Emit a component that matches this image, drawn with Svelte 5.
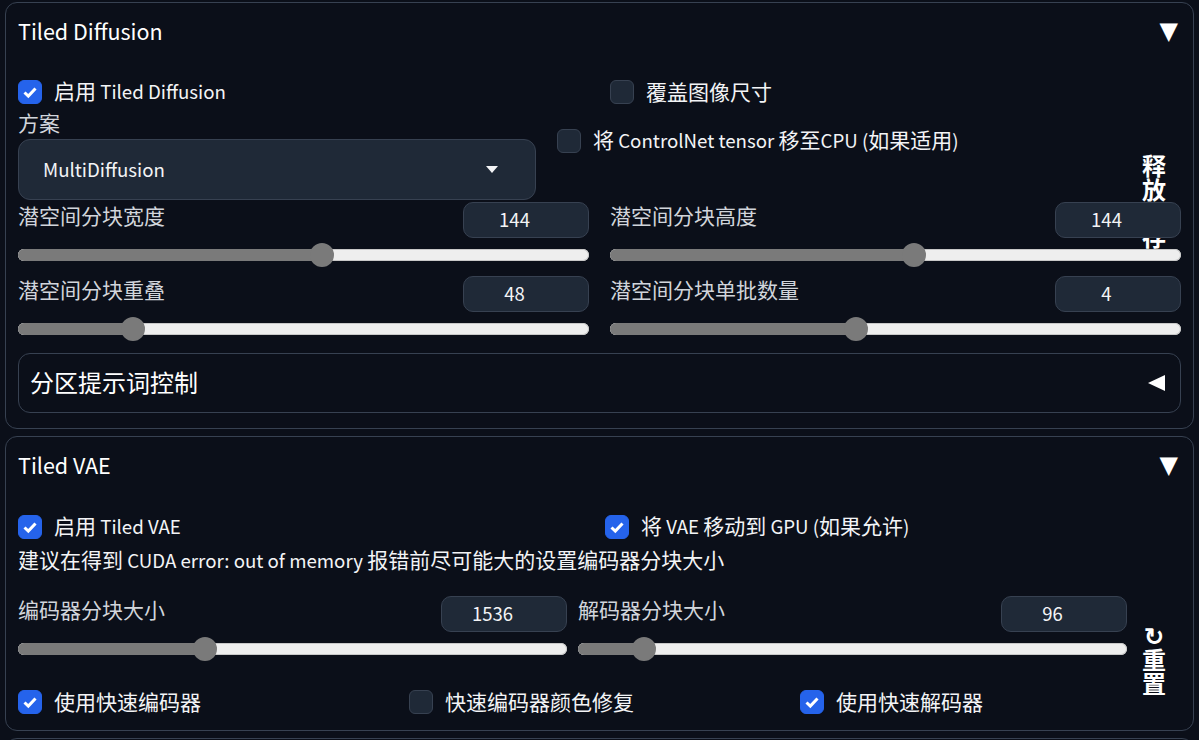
<script>
  const tile = [
    { label: '潜空间分块宽度', value: '144', pos: 53.3 },
    { label: '潜空间分块高度', value: '144', pos: 53.3 },
    { label: '潜空间分块重叠', value: '48', pos: 20.2 },
    { label: '潜空间分块单批数量', value: '4', pos: 43 }
  ];
  const vae = [
    { label: '编码器分块大小', value: '1536', pos: 34 },
    { label: '解码器分块大小', value: '96', pos: 12 }
  ];
  const parts = (s) => s.split(/([\x20-\x7e]+)/).filter(Boolean);
  const isEn = (s) => /^[\x20-\x7e]+$/.test(s);
</script>

{#snippet txt(s)}
  {#each parts(s) as p}<span class:en={isEn(p)}>{p}</span>{/each}
{/snippet}

{#snippet check(on, text)}
  <label class="check">
    <span class="box" class:on>
      {#if on}
        <svg viewBox="0 0 24 24" width="24" height="24"><path d="M6.5 12.5l3.8 3.6 7.2-7.6" fill="none" stroke="#fff" stroke-width="3" /></svg>
      {/if}
    </span>
    <span class="ctext">{@render txt(text)}</span>
  </label>
{/snippet}

{#snippet slider(s)}
  <div class="slider">
    <div class="head">
      <span class="lbl">{s.label}</span>
      <input class="num" readonly value={s.value} />
    </div>
    <div class="track">
      <div class="fill" style="width:{s.pos}%"><span class="thumb"></span></div>
    </div>
  </div>
{/snippet}

<main>
  <section class="panel first">
    <header class="title"><span>Tiled Diffusion</span><span class="tri">▼</span></header>
    <button class="side free">释放显存</button>
    <div class="two r1">
      {@render check(true, '启用 Tiled Diffusion')}
      {@render check(false, '覆盖图像尺寸')}
    </div>
    <div class="method">
      <div class="mcol">
        <div class="lbl mlabel">方案</div>
        <div class="select"><span class="en">MultiDiffusion</span><i class="caret"></i></div>
      </div>
      <div class="mright">{@render check(false, '将 ControlNet tensor 移至CPU (如果适用)')}</div>
    </div>
    <div class="two sliders">
      {#each tile as s}{@render slider(s)}{/each}
    </div>
    <div class="acc"><span class="acctext">分区提示词控制</span><span class="left"></span></div>
  </section>

  <section class="panel second">
    <header class="title"><span>Tiled VAE</span><span class="tri">▼</span></header>
    <div class="vr1">
      {@render check(true, '启用 Tiled VAE')}
      {@render check(true, '将 VAE 移动到 GPU (如果允许)')}
    </div>
    <p class="hint">{@render txt('建议在得到 CUDA error: out of memory 报错前尽可能大的设置编码器分块大小')}</p>
    <div class="vsl">
      <div class="vgrid">
        {#each vae as s}{@render slider(s)}{/each}
      </div>
      <button class="side reset">↻ 重置</button>
    </div>
    <div class="three">
      {@render check(true, '使用快速编码器')}
      {@render check(false, '快速编码器颜色修复')}
      {@render check(true, '使用快速解码器')}
    </div>
  </section>

  <section class="panel third"></section>
</main>

<style>
  :global(body) { margin: 0; background: #0b0f19; overflow: hidden; }
  main {
    width: 1199px; height: 740px; overflow: hidden; box-sizing: border-box;
    padding: 2px 5px 0; background: #0b0f19; color: #f3f4f6;
    font-family: "Noto Sans CJK SC", "Noto Sans", sans-serif; font-size: 21px; line-height: 24px;
  }
  .en { font-size: 18.7px; }
  .panel {
    position: relative; box-sizing: border-box; border: 1px solid #374151; border-radius: 12px;
    padding: 0 12px; margin-bottom: 7px;
  }
  .first { height: 427px; }
  .second { height: 295px; }
  .third { height: 40px; margin: 0; }
  .title {
    box-sizing: border-box; display: flex; justify-content: space-between; align-items: center; height: 58px;
    font-size: 21.5px; color: #fff; padding-bottom: 3px;
  }
  .tri { font-size: 24px; font-family: "DejaVu Sans", sans-serif; margin-right: 3px; }
  .check { display: flex; align-items: center; gap: 12px; height: 24px; white-space: nowrap; }
  .ctext { padding-bottom: 3px; }
  .box {
    box-sizing: border-box; width: 24px; height: 24px; flex: none; border-radius: 6px;
    background: #1f2937; border: 1px solid #374151; display: block;
  }
  .box.on { background: #2563eb; border-color: #2563eb; }
  .box svg { display: block; margin: -1px; }
  .two { display: grid; grid-template-columns: 571px 571px; column-gap: 21px; }
  .r1 { margin-top: 19px; }
  .lbl { color: #d1d5db; white-space: nowrap; }
  .method { display: flex; gap: 21px; margin-top: 8px; }
  .mcol { width: 518px; }
  .mlabel { height: 27px; line-height: 20px; }
  .mright { padding-top: 17px; }
  .select {
    box-sizing: border-box; height: 61px; display: flex; align-items: center; justify-content: space-between;
    padding: 0 37px 1px 24px; background: #1f2937; border: 1px solid #374151; border-radius: 12px;
  }
  .caret { width: 0; height: 0; border: 6px solid transparent; border-top: 7px solid #f3f4f6; border-bottom: 0; margin-top: 1px; }
  .sliders { row-gap: 0; position: relative; z-index: 1; margin-top: 2px; }
  .slider { height: 74px; }
  .head { display: flex; justify-content: space-between; height: 36px; }
  .head .lbl { line-height: 26px; }
  .num {
    box-sizing: border-box; width: 126px; height: 36px; background: #1f2937; border: 1px solid #374151;
    border-radius: 10px; color: #f3f4f6; text-align: center; padding: 0 23px 2px 0; outline: none;
    font: 18.5px "Noto Sans CJK SC", sans-serif;
  }
  .track {
    margin-top: 11px; height: 12px; box-sizing: border-box; border-radius: 6px; background: #eee;
    box-shadow: inset 0 0 0 1px #c8c8c8;
  }
  .fill { position: relative; height: 100%; background: #7a7a7a; border-radius: 6px 0 0 6px; }
  .thumb {
    position: absolute; right: -12px; top: -6px; width: 24px; height: 24px; border-radius: 50%; background: #7a7a7a;
  }
  .acc {
    box-sizing: border-box; height: 60px; margin-top: 3px; border: 1px solid #374151; border-radius: 12px;
    display: flex; align-items: center; justify-content: space-between; padding: 0 15px 0 11px; font-size: 24px; color: #fff;
  }
  .acctext { padding-bottom: 2px; }
  .left { width: 0; height: 0; border: 8.5px solid transparent; border-right: 17px solid #fff; border-left: 0; }
  .side {
    background: none; border: 0; padding: 0; color: #fff; font: bold 24px/23.5px "Noto Sans CJK SC", sans-serif;
    width: 24px; text-align: center;
  }
  .free { position: absolute; right: 27px; top: 150px; z-index: 0; }
  .vr1 { display: grid; grid-template-columns: 587px 1fr; margin-top: 20px; }
  .hint { margin: 8px 0 0; height: 26px; color: #f3f4f6; }
  .vsl { display: flex; margin-top: 23px; height: 74px; }
  .vgrid { display: grid; grid-template-columns: 549px 549px; column-gap: 11px; flex: none; }
  .reset { margin: 27px 0 0 15px; height: 72px; align-self: flex-start; line-height: 24px; }
  .three { display: grid; grid-template-columns: repeat(3, 391px); margin-top: 20px; }
</style>
